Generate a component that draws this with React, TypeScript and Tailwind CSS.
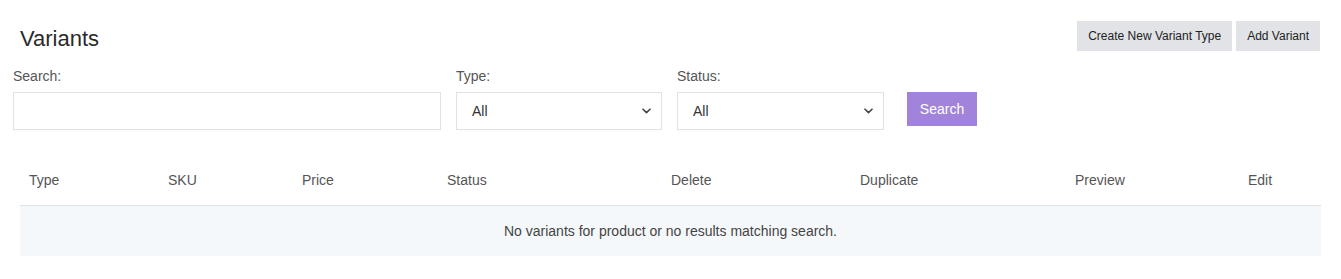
import React from 'react';

const columns = ['Type', 'SKU', 'Price', 'Status', 'Delete', 'Duplicate', 'Preview', 'Edit'];

const Chevron: React.FC = () => (
    <svg className="pointer-events-none absolute right-[11px] top-1/2 -translate-y-1/2" width="9" height="6" viewBox="0 0 9 6" fill="none">
        <path d="M1 1.2L4.5 4.6L8 1.2" stroke="#444" strokeWidth="1.6" strokeLinecap="round" strokeLinejoin="round" />
    </svg>
);

const SelectBox: React.FC<{ label: string; width: string }> = ({ label, width }) => (
    <div className={width}>
        <label className="block text-[14px] leading-[20px] text-[#555] mb-[6px]">{label}</label>
        <div className="relative">
            <select className="appearance-none block w-full h-[38px] bg-white border border-[#dfe2e6] pl-[15px] pr-8 text-[14px] text-[#333] focus:outline-none">
                <option>All</option>
            </select>
            <Chevron />
        </div>
    </div>
);

const App: React.FC = () => {
    return (
        <div className="w-[1341px] h-[279px] bg-white font-['Liberation_Sans',Arial,sans-serif]">
            <div className="flex items-start justify-between pl-[20px] pr-[21px] pt-[21px]">
                <h2 className="text-[22px] leading-[26px] text-[#2a2a2a] mt-[5px]">Variants</h2>
                <div className="flex gap-[4px]">
                    <button className="h-[30px] px-[11px] bg-[#e1e3e7] text-[12px] text-[#222]">Create New Variant Type</button>
                    <button className="h-[30px] px-[11px] bg-[#e1e3e7] text-[12px] text-[#222]">Add Variant</button>
                </div>
            </div>

            <div className="flex items-start pl-[13px] mt-[14px]">
                <div className="w-[428px]">
                    <label className="block text-[14px] leading-[20px] text-[#555] mb-[6px]">Search:</label>
                    <input type="text" className="block w-full h-[38px] border border-[#dfe2e6] px-3 text-[14px] focus:outline-none" />
                </div>
                <div className="ml-[15px]">
                    <SelectBox label="Type:" width="w-[206px]" />
                </div>
                <div className="ml-[15px]">
                    <SelectBox label="Status:" width="w-[207px]" />
                </div>
                <button className="ml-[23px] mt-[26px] h-[34px] w-[70px] bg-[#a283dc] text-white text-[14px]">Search</button>
            </div>

            <div className="mx-[20px] mt-[38px] w-[1301px]">
                <div className="grid grid-cols-[139px_134px_145px_224px_189px_215px_173px_82px] border-b border-[#dee2e6] h-[38px] pt-[2px] items-start">
                    {columns.map((c) => (
                        <div key={c} className="pl-[9px] text-[14px] leading-[20px] text-[#555]">{c}</div>
                    ))}
                </div>
                <div className="h-[50px] bg-[#f5f8fa] flex items-center justify-center text-[14px] text-[#444]">
                    No variants for product or no results matching search.
                </div>
            </div>
        </div>
    );
};

export default App;
